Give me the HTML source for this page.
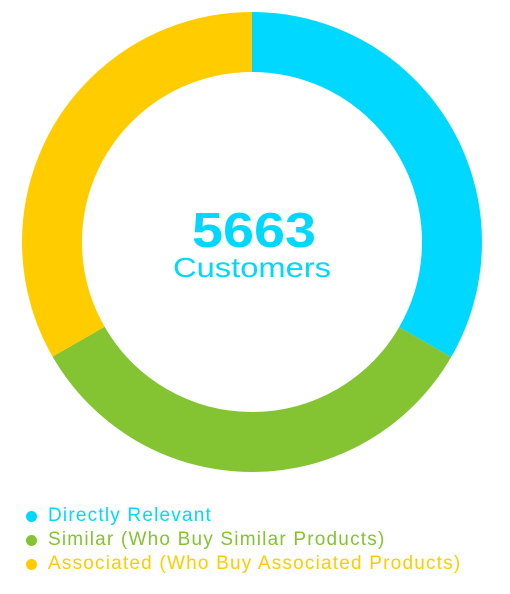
<!DOCTYPE html>
<html><head><style>
body{margin:0;width:510px;height:594px;background:#fff;overflow:hidden;font-family:"Liberation Sans",sans-serif;}
.leg{position:absolute;left:48px;font-size:19px;letter-spacing:1.2px;line-height:24px;white-space:nowrap;}
.dot{position:absolute;left:-22px;top:7px;width:11px;height:11px;border-radius:50%;}
</style></head><body>
<svg width="510" height="594" style="position:absolute;left:0;top:0">
<g transform="rotate(-90 252 242)" fill="none" stroke-width="60">
<circle cx="252" cy="242" r="200" stroke="#00d8ff" stroke-dasharray="418.88 1256.64" stroke-dashoffset="0"/>
<circle cx="252" cy="242" r="200" stroke="#84c332" stroke-dasharray="418.88 1256.64" stroke-dashoffset="-418.88"/>
<circle cx="252" cy="242" r="200" stroke="#ffcc00" stroke-dasharray="418.88 1256.64" stroke-dashoffset="-837.76"/>
</g>
<text x="192" y="247" textLength="124" lengthAdjust="spacingAndGlyphs" font-family="Liberation Sans" font-weight="bold" font-size="49" fill="#00d8ff">5663</text>
<text x="173" y="277" textLength="158" lengthAdjust="spacingAndGlyphs" font-family="Liberation Sans" font-size="28" fill="#00d8ff">Customers</text>
</svg>
<div class="leg" style="top:504px;color:#00d8ff"><span class="dot" style="background:#00d8ff"></span>Directly Relevant</div>
<div class="leg" style="top:528px;color:#84c332"><span class="dot" style="background:#84c332"></span>Similar (Who Buy Similar Products)</div>
<div class="leg" style="top:552px;color:#ffcc00"><span class="dot" style="background:#ffcc00"></span>Associated (Who Buy Associated Products)</div>
</body></html>
